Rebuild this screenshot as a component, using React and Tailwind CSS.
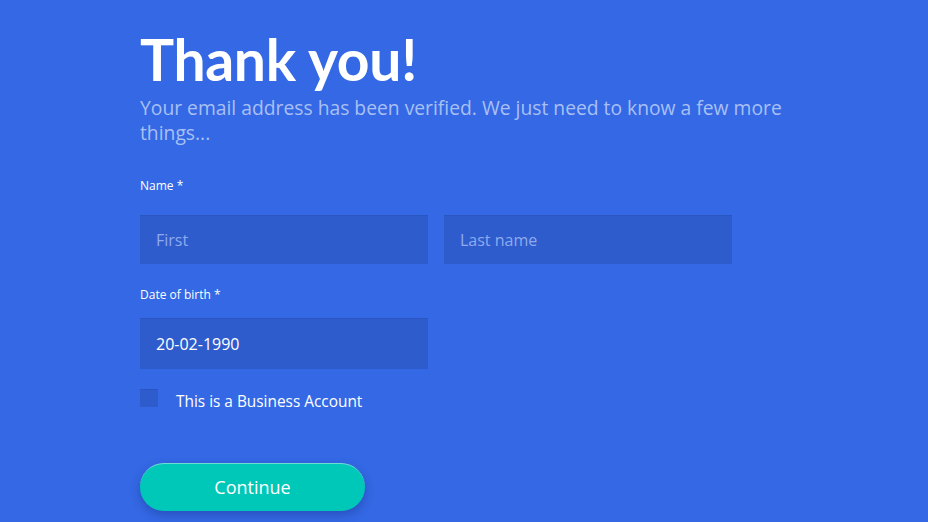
import React from "react";

const App = () => {
  return (
    <div
      className="min-h-[522px] w-full bg-[#3468e4] overflow-hidden"
      style={{ fontFamily: "'Open Sans', Lato, sans-serif" }}
    >
      <div className="w-[670px] ml-[140px] pt-[25px]">
        {/* Heading */}
        <h1
          className="text-[57px] leading-[68px] font-bold text-white tracking-[-0.3px]"
          style={{ fontFamily: "Lato, sans-serif" }}
        >
          Thank you!
        </h1>
        <p className="text-[19.3px] leading-[25px] text-[#a9c0f4] mt-[2px]">
          Your email address has been verified. We just need to know a few more
          things...
        </p>

        {/* Name */}
        <label className="block text-[12px] text-white mt-[33px] leading-[16px]">
          Name *
        </label>
        <div className="flex gap-[16px] mt-[21px]">
          <input
            type="text"
            placeholder="First"
            className="w-[288px] h-[49px] bg-[#2f5ccd] border-t border-[#2b55c2] px-[16px] text-[16px] text-white placeholder:text-[#8eaaee] outline-none"
          />
          <input
            type="text"
            placeholder="Last name"
            className="w-[288px] h-[49px] bg-[#2f5ccd] border-t border-[#2b55c2] px-[16px] text-[16px] text-white placeholder:text-[#8eaaee] outline-none"
          />
        </div>

        {/* Date of birth */}
        <label className="block text-[12px] text-white mt-[23px] leading-[16px]">
          Date of birth *
        </label>
        <input
          type="text"
          defaultValue="20-02-1990"
          className="block w-[288px] h-[51px] bg-[#2f5ccd] border-t border-[#2b55c2] mt-[15px] px-[16px] text-[16px] text-white outline-none"
        />

        {/* Business checkbox */}
        <div className="flex items-start mt-[20px]">
          <span className="w-[18px] h-[18px] bg-[#2f5ccd] border-t border-[#2b55c2]" />
          <span className="ml-[18px] text-[15.4px] leading-[20px] text-white mt-[3px]">
            This is a Business Account
          </span>
        </div>

        {/* Continue */}
        <button className="mt-[51px] w-[225px] h-[48px] rounded-full bg-[#00c8b8] text-white text-[18px] shadow-[0_4px_10px_rgba(20,40,120,0.35)] border-t border-[#6fdcd3]">
          Continue
        </button>
      </div>
    </div>
  );
};

export default App;
